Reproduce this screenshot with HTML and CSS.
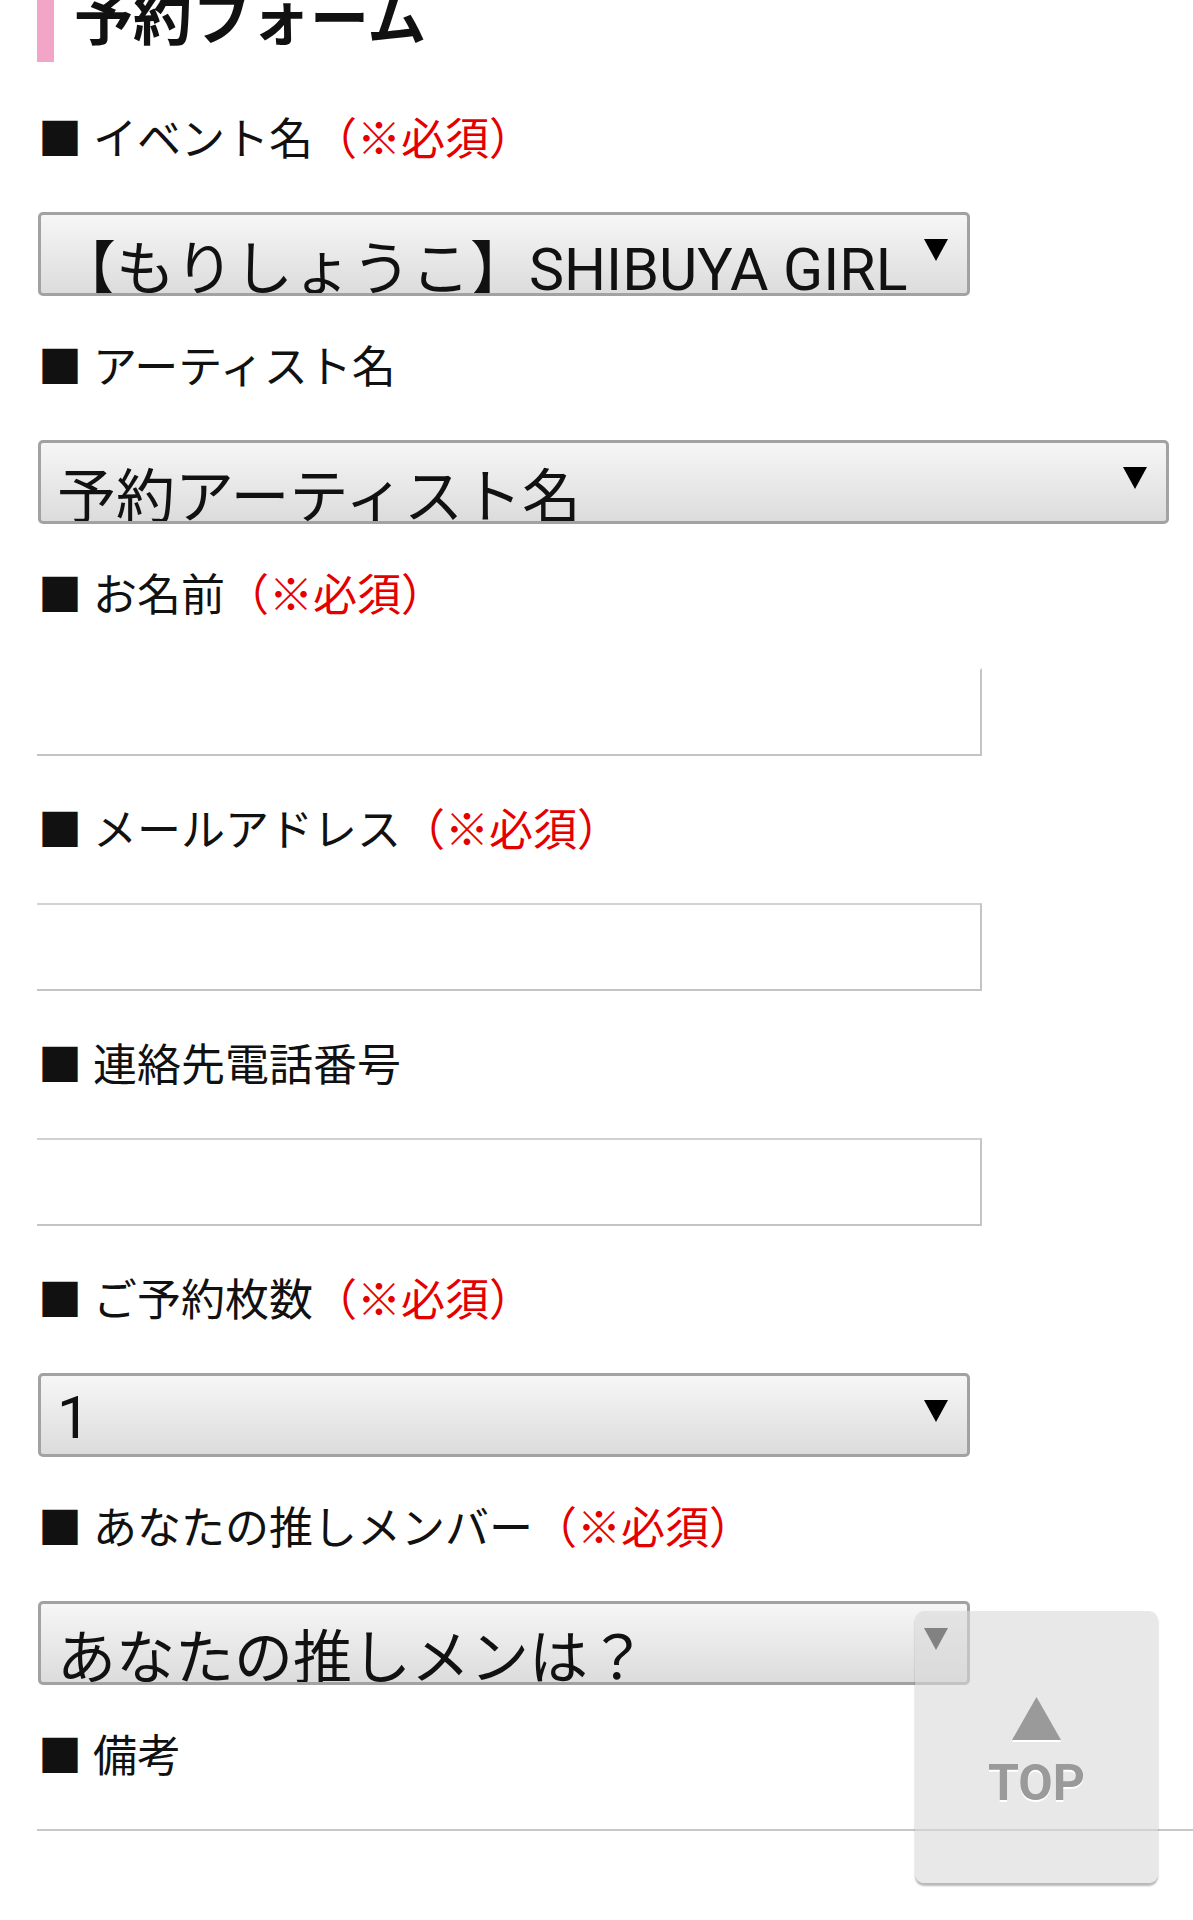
FILE: index.html
```html
<!DOCTYPE html>
<html lang="ja">
<head>
<meta charset="utf-8">
<title>予約フォーム</title>
<link rel="stylesheet" href="styles.css">
</head>
<body>
<div class="page">
  <h2 class="heading">予約フォーム</h2>

  <div class="field field-select">
    <div class="label">■ イベント名<span class="req">（※必須）</span></div>
    <div class="select">
      <span class="select-text">【もりしょうこ】SHIBUYA GIRL</span>
      <svg class="select-arrow" viewBox="0 0 24 22"><polygon points="0,0 24,0 12,22"/></svg>
    </div>
  </div>

  <div class="field field-select">
    <div class="label">■ アーティスト名</div>
    <div class="select select-wide">
      <span class="select-text">予約アーティスト名</span>
      <svg class="select-arrow" viewBox="0 0 24 22"><polygon points="0,0 24,0 12,22"/></svg>
    </div>
  </div>

  <div class="field field-input">
    <div class="label">■ お名前<span class="req">（※必須）</span></div>
    <div class="input input-notop"></div>
  </div>

  <div class="field field-input">
    <div class="label">■ メールアドレス<span class="req">（※必須）</span></div>
    <div class="input"></div>
  </div>

  <div class="field field-input">
    <div class="label">■ 連絡先電話番号</div>
    <div class="input"></div>
  </div>

  <div class="field field-select">
    <div class="label">■ ご予約枚数<span class="req">（※必須）</span></div>
    <div class="select">
      <span class="select-text">1</span>
      <svg class="select-arrow" viewBox="0 0 24 22"><polygon points="0,0 24,0 12,22"/></svg>
    </div>
  </div>

  <div class="field field-select">
    <div class="label">■ あなたの推しメンバー<span class="req">（※必須）</span></div>
    <div class="select">
      <span class="select-text">あなたの推しメンは？</span>
      <svg class="select-arrow" viewBox="0 0 24 22"><polygon points="0,0 24,0 12,22"/></svg>
    </div>
  </div>

  <div class="field">
    <div class="label">■ 備考</div>
    <div class="textarea"></div>
  </div>
</div>

<div class="to-top">
  <svg class="to-top-arrow" viewBox="0 0 49 45"><polygon points="24.5,0 49,43 0,43" class="tri-shadow"/><polygon points="24.5,0 49,43 0,43"/></svg>
  <span class="to-top-text">TOP</span>
</div>
</body>
</html>
```

FILE: styles.css
```css
html, body {
  margin: 0;
  padding: 0;
  background: #ffffff;
  overflow-x: hidden;
}

body {
  font-family: "Roboto", "Noto Sans CJK JP", sans-serif;
  color: #111111;
}

.page {
  margin-top: -28px;
  padding-left: 38px;
}

.heading {
  margin: 0 0 40px -1px;
  font-size: 59px;
  font-weight: 700;
  line-height: 84px;
  padding: 6px 0 0 20px;
  border-left: 17px solid #f3a5c8;
  color: #111111;
}

.label {
  font-size: 44px;
  line-height: 66px;
  padding-top: 5px;
  margin-bottom: 39px;
  white-space: nowrap;
}

.req {
  color: #e50000;
}

.field-select {
  margin-bottom: 34px;
}

.field-input {
  margin-bottom: 37px;
}

.select {
  box-sizing: border-box;
  width: 932px;
  height: 84px;
  border: 3px solid #a2a2a2;
  border-radius: 5px;
  background: linear-gradient(#f6f6f6, #dcdcdc);
  display: flex;
  align-items: flex-start;
  overflow: hidden;
  padding: 7px 19px 0 16px;
  gap: 12px;
}

.select-wide {
  width: 1131px;
}

.select-text {
  flex: 1;
  font-size: 59px;
  line-height: normal;
  white-space: nowrap;
  overflow: hidden;
  color: #111111;
}

.select-arrow {
  flex: none;
  width: 24px;
  height: 22px;
  margin-top: 17px;
  fill: #000000;
}

.input {
  box-sizing: border-box;
  width: 945px;
  height: 88px;
  margin-left: -1px;
  border-top: 2px solid #d2d2d2;
  border-right: 2px solid #c4c4c4;
  border-bottom: 2px solid #c4c4c4;
  border-left: 0;
}

.input-notop {
  border-top-color: #ffffff;
}

.textarea {
  margin-left: -1px;
  margin-right: -40px;
  height: 200px;
  border-top: 2px solid #c8c8c8;
}

.to-top {
  position: fixed;
  right: 35px;
  bottom: 37px;
  width: 243px;
  height: 272px;
  box-sizing: border-box;
  border-radius: 9px;
  background: rgba(217, 217, 217, 0.6);
  box-shadow: 0 3px 2px rgba(0, 0, 0, 0.28);
  display: flex;
  flex-direction: column;
  align-items: center;
  padding-top: 86px;
}

.to-top-arrow {
  width: 49px;
  height: 45px;
  fill: #9a9a9a;
}

.to-top-arrow .tri-shadow {
  fill: #ffffff;
  transform: translateY(2px);
}

.to-top-text {
  margin-top: 16px;
  font-family: "Roboto", sans-serif;
  font-weight: 700;
  font-size: 50px;
  line-height: 50px;
  color: #9a9a9a;
  text-shadow: 0 2px 0 #ffffff;
}
```
